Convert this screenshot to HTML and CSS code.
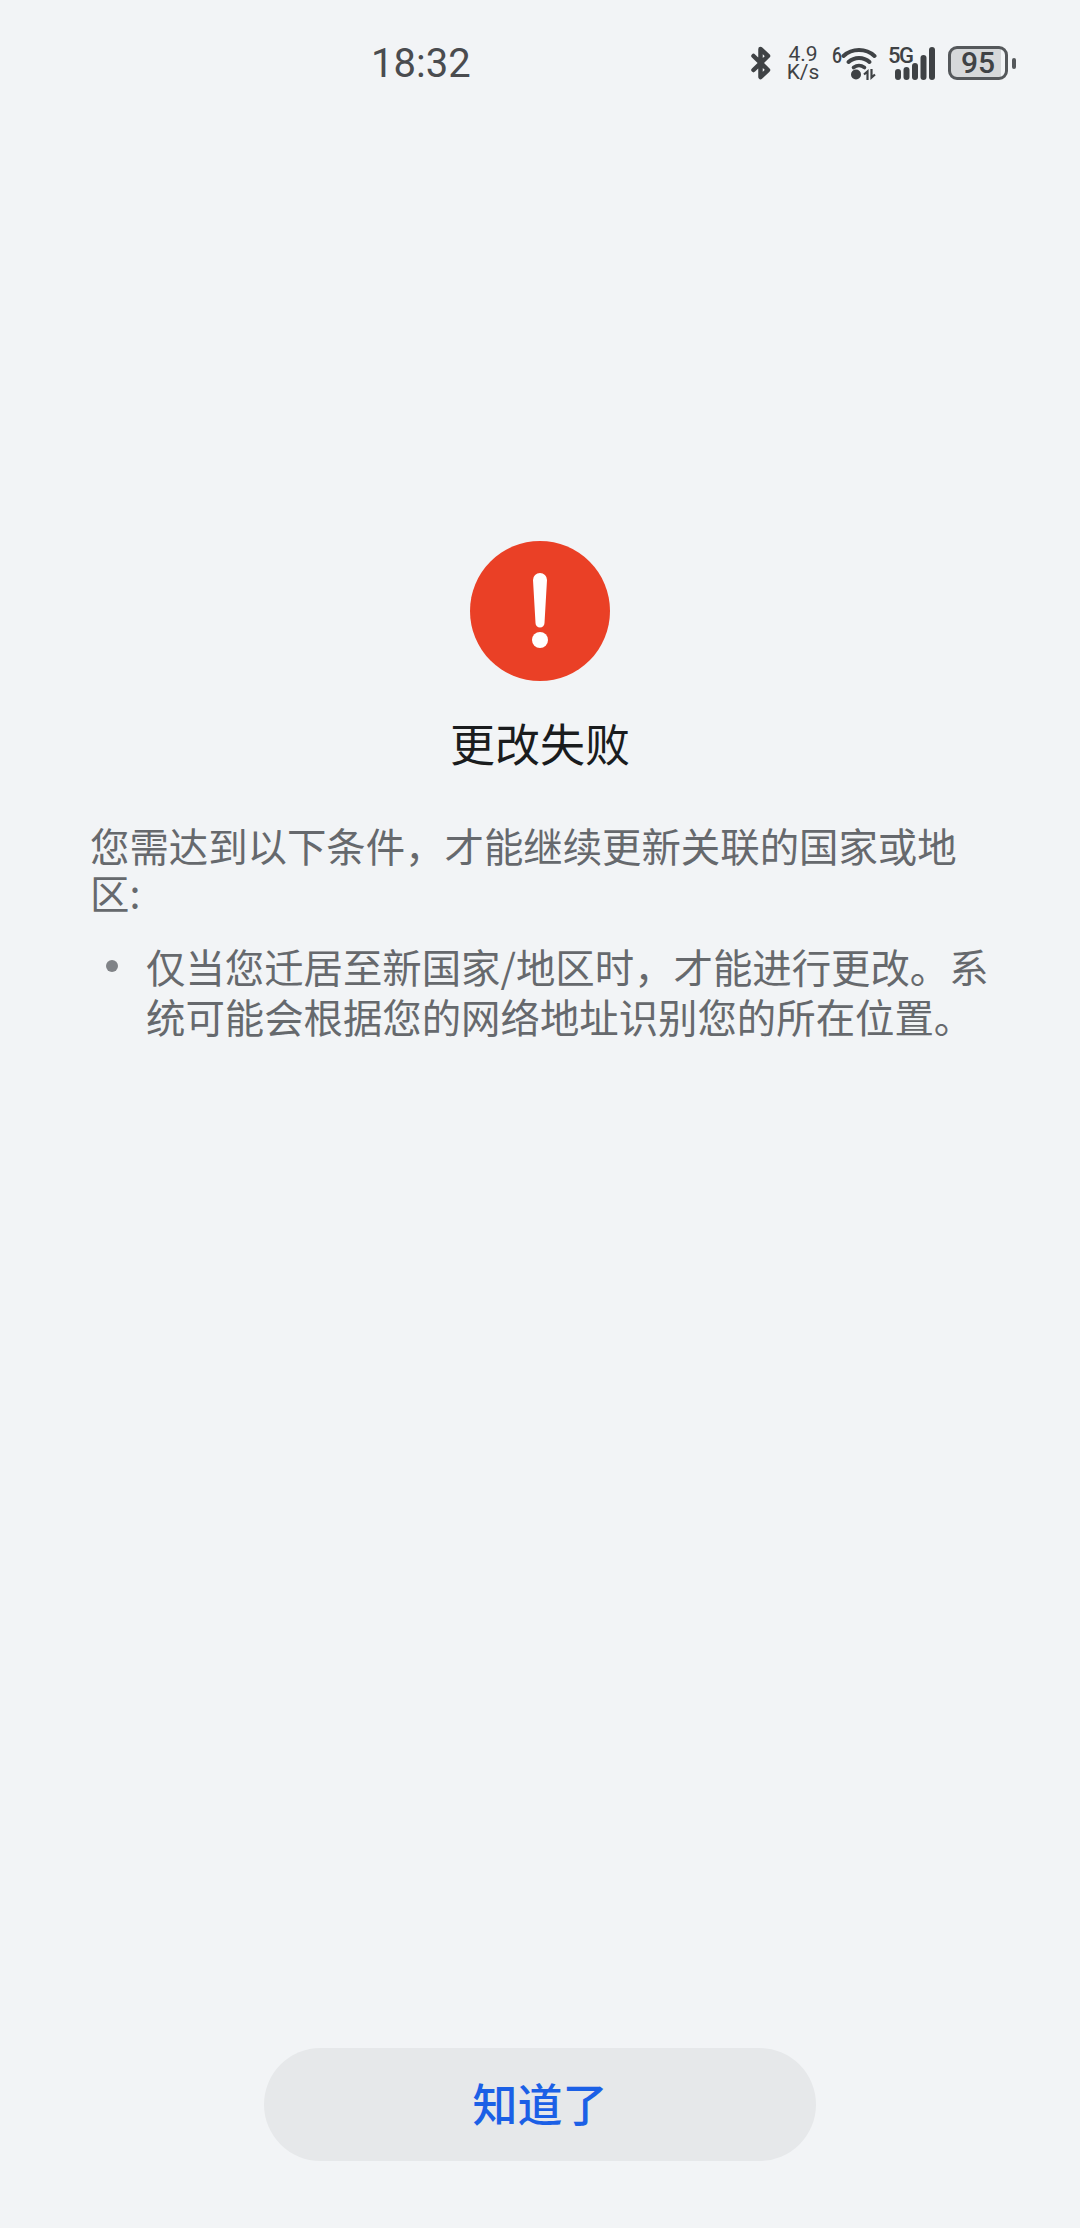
FILE: index.html
```html
<!DOCTYPE html>
<html lang="zh-CN">
<head>
<meta charset="utf-8">
<title>更改失败</title>
<link rel="stylesheet" href="styles.css">
</head>
<body>
<div class="page">
  <header class="status">
    <span class="time">18:32</span>
    <div class="tray">
      <svg class="bt" width="20" height="34" viewBox="0 0 20 34"><path d="M2.500 10 17 24 9.500 31V3L17 10 2.500 24" fill="none" stroke="#3f4245" stroke-width="4.500" stroke-linejoin="round" stroke-linecap="round"/></svg>
      <div class="speed"><span>4.9</span><span>K/s</span></div>
      <div class="wifi">
        <span class="wifi-six">6</span>
        <svg width="36" height="33" viewBox="0 0 36 33"><g fill="none" stroke="#3f4245" stroke-linecap="round"><path d="M2.500 9C11 1 25 1 33.500 9" stroke-width="4"/><path d="M7.500 15C13.500 9.500 22.500 9.500 28.500 15" stroke-width="4"/><path d="M12.500 20.500C16 18 20 18 23.500 20.500" stroke-width="3.600"/></g><circle cx="15" cy="27.500" r="5" fill="#3f4245"/><path d="M23 27.500l3.500-3v8.500M34 27.500l-3.500 3v-8.500" fill="none" stroke="#3f4245" stroke-width="2.200"/></svg>
      </div>
      <div class="cell">
        <span class="cell-five">5G</span>
        <svg width="41" height="33" viewBox="0 0 41 33"><g fill="#3f4245"><rect x="1" y="22" width="6" height="11" rx="3"/><rect x="9.500" y="20" width="6" height="13" rx="3"/><rect x="18" y="16" width="6" height="17" rx="3"/><rect x="26.500" y="8" width="6" height="25" rx="3"/><rect x="35" y="0" width="6" height="33" rx="3"/></g></svg>
      </div>
      <div class="battery"><span class="battery-level">95</span><span class="battery-cap"></span></div>
    </div>
  </header>

  <main class="content">
    <svg class="alert" width="140" height="140" viewBox="0 0 140 140"><circle cx="70" cy="70" r="70" fill="#ea4026"/><path d="M63 39a7 7 0 0 1 14 0l-2.500 43a4.500 4.500 0 0 1-9 0z" fill="#fff"/><circle cx="70" cy="99" r="8" fill="#fff"/></svg>
    <h1 class="title">更改失败</h1>
    <p class="lead">您需达到以下条件，才能继续更新关联的国家或地区:</p>
    <ul class="reasons">
      <li class="reason">仅当您迁居至新国家/地区时，才能进行更改。系统可能会根据您的网络地址识别您的所在位置。</li>
    </ul>
  </main>

  <footer class="actions">
    <button class="ok" type="button">知道了</button>
  </footer>
</div>
</body>
</html>
```

FILE: styles.css
```css
* { box-sizing: border-box; }
html, body { margin: 0; padding: 0; }
body {
  background: #f2f4f6;
  font-family: "Noto Sans CJK SC", "Roboto", sans-serif;
}
.page {
  display: flex;
  flex-direction: column;
  height: 2228px;
}
.status {
  display: flex;
  align-items: center;
  justify-content: space-between;
  height: 64px;
  margin-top: 31px;
  padding: 0 64px 0 371px;
  color: #3f4245;
  font-family: "Roboto", sans-serif;
}
.time {
  padding-top: 2px;
  font-size: 40px;
  line-height: 1;
  color: #4a4c4f;
}
.tray {
  display: flex;
  align-items: center;
  height: 40px;
}
.bt { margin-right: 16px; }
.speed {
  display: flex;
  flex-direction: column;
  align-items: center;
  width: 32px;
  margin-right: 13px;
  font-size: 21px;
  line-height: 18px;
}
.wifi, .cell {
  display: flex;
  align-items: flex-start;
  height: 33px;
}
.wifi { margin-right: 11px; }
.wifi-six, .cell-five {
  font-size: 22px;
  font-weight: 500;
  line-height: 18px;
}
.wifi-six { width: 9px; transform: scaleX(.8); transform-origin: left; }
.cell { width: 47px; margin-right: 13px; }
.cell-five { width: 6px; white-space: nowrap; letter-spacing: -1.500px; }
.battery {
  display: flex;
  align-items: center;
}
.battery-level {
  display: block;
  width: 60px;
  height: 34px;
  border: 3px solid #55585b;
  border-radius: 9px;
  background: linear-gradient(90deg, #d6d8da 93%, transparent 93%);
  font-size: 30px;
  font-weight: 500;
  line-height: 28px;
  text-align: center;
}
.battery-cap {
  width: 4px;
  height: 11px;
  margin-left: 4px;
  border-radius: 2px;
  background: #55585b;
}
.content {
  display: flex;
  flex-direction: column;
  flex: 1;
  padding: 446px 90px 0;
}
.alert {
  flex: none;
  align-self: center;
}
.title {
  margin: 31px 0 0;
  font-size: 45px;
  font-weight: 400;
  line-height: 62px;
  text-align: center;
  color: #1a1c1e;
}
.lead {
  margin: 47px 0 0;
  font-size: 39.400px;
  line-height: 47px;
  color: #66696d;
}
.reasons {
  margin: 26px 0 0;
  padding: 0 0 0 56px;
  list-style: none;
}
.reason {
  position: relative;
  font-size: 39.400px;
  line-height: 50px;
  color: #66696d;
}
.reason::before {
  content: "";
  position: absolute;
  left: -40px;
  top: 19px;
  width: 12px;
  height: 12px;
  border-radius: 50%;
  background: #808387;
}
.actions {
  display: flex;
  justify-content: center;
  padding-bottom: 67px;
}
.ok {
  width: 552px;
  height: 113px;
  padding: 0 0 4px;
  border: 0;
  border-radius: 57px;
  background: #e6e8ea;
  color: #1b60e6;
  font-family: inherit;
  font-size: 45px;
  font-weight: 500;
}
```
